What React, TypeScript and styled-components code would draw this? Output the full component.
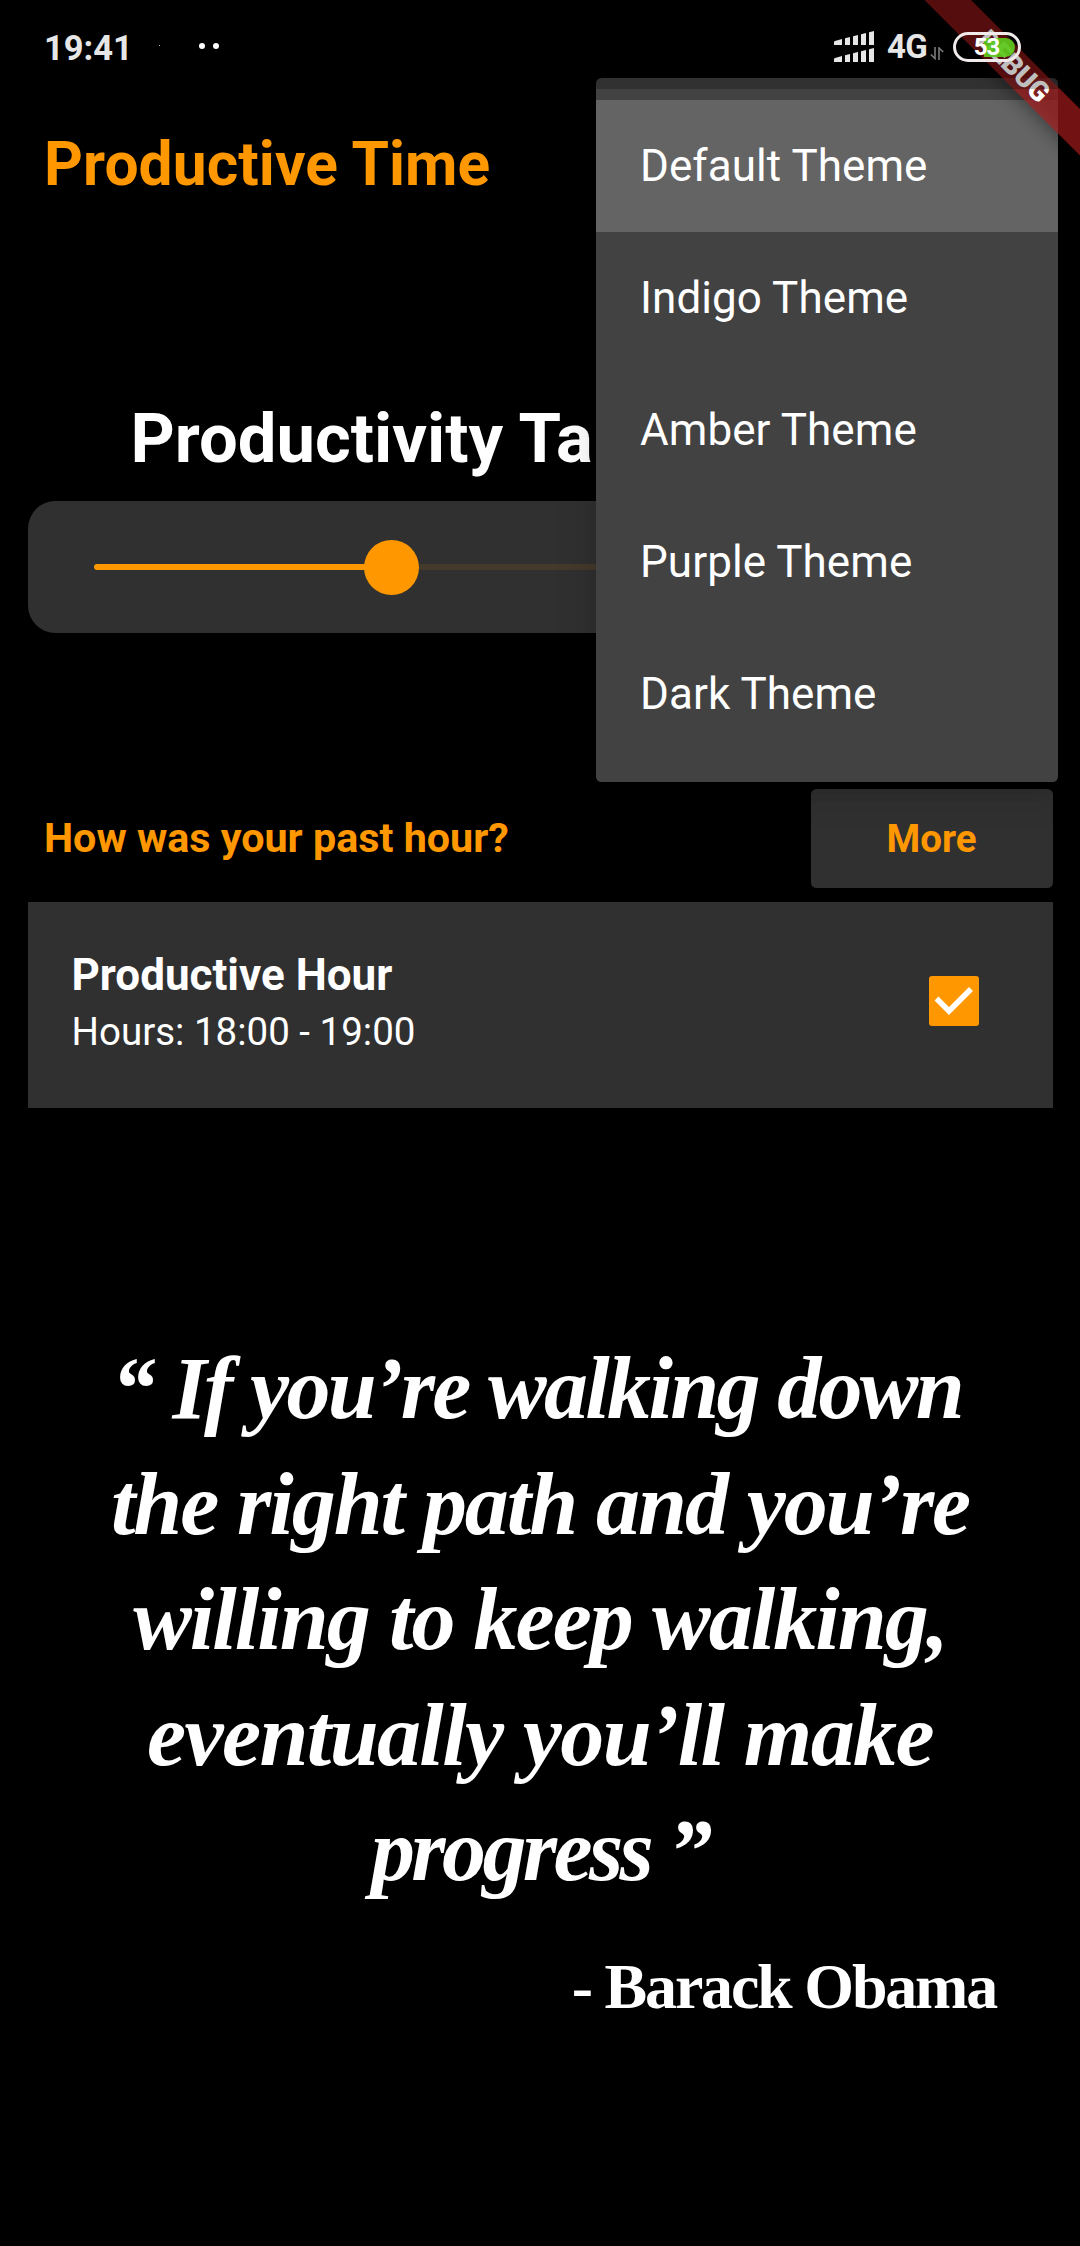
import React from "react";
import styled, { createGlobalStyle } from "styled-components";

const color = {
  accent: "#ff9800",
  surface: "#303030",
  menu: "#424242",
  menuActive: "#646464",
  status: "#e6e6e6",
};

const GlobalStyle = createGlobalStyle`
  body {
    margin: 0;
    background: #000;
  }
  * {
    box-sizing: border-box;
  }
`;

const Screen = styled.div`
  position: relative;
  display: flex;
  flex-direction: column;
  width: 1080px;
  height: 2246px;
  overflow: hidden;
  background: #000;
  color: #fff;
  font-family: Roboto, "Liberation Sans", sans-serif;
`;

/* Status bar */

const StatusBar = styled.header`
  position: relative;
  z-index: 3;
  display: flex;
  align-items: center;
  height: 89px;
  padding: 6px 59px 0 44px;
  background: rgba(0, 0, 0, 0.25);
  color: ${color.status};
`;

const Clock = styled.time`
  width: 88px;
  font-size: 34.5px;
  font-weight: 700;
  line-height: 40px;
  letter-spacing: 0;
`;

const Dot = styled.span<{ $size: number; $gap: number }>`
  width: ${(p) => p.$size}px;
  height: ${(p) => p.$size}px;
  margin-left: ${(p) => p.$gap}px;
  margin-bottom: 4px;
  border-radius: 50%;
  background: #fff;
`;

const StatusIcons = styled.div`
  display: flex;
  align-items: center;
  margin-left: auto;
`;

const Signal = styled.svg`
  display: block;
  width: 40px;
  height: 31px;
  margin: 0 13px 2px 0;
`;

const Network = styled.span`
  width: 43px;
  font-size: 33px;
  font-weight: 700;
  line-height: 38px;
  letter-spacing: -0.7px;
  margin-bottom: 1px;
`;

const Traffic = styled.svg`
  display: block;
  width: 14px;
  height: 13px;
  margin: 12px 9px 0 0;
`;

const Battery = styled.div`
  display: flex;
  align-items: center;
  justify-content: flex-end;
  width: 68px;
  height: 30px;
  margin-bottom: 1px;
  padding-right: 3px;
  border: 3px solid #f0eaea;
  border-radius: 15px;
`;

const BatteryLevel = styled.div`
  display: flex;
  align-items: center;
  justify-content: flex-end;
  width: 31px;
  height: 19px;
  padding-right: 16px;
  border-radius: 0 10px 10px 0;
  background: rgba(92, 202, 28, 0.92);
  color: #fff;
  font-size: 24px;
  font-weight: 700;
  line-height: 19px;
  letter-spacing: -1.2px;
`;

/* App bar */

const AppBar = styled.div`
  display: flex;
  align-items: center;
  height: 154px;
  padding: 0 44px 3px;
`;

const AppTitle = styled.h1`
  margin: 0;
  color: ${color.accent};
  font-size: 60.5px;
  font-weight: 700;
  line-height: 71px;
  letter-spacing: 0.07px;
`;

/* Slider */

const TaskSection = styled.section`
  display: flex;
  flex-direction: column;
  padding: 155px 27.5px 0;
`;

const TaskTitle = styled.h2`
  margin: 0 0 22px 103px;
  font-size: 68.75px;
  font-weight: 700;
  line-height: 81px;
`;

const SliderCard = styled.div`
  display: flex;
  align-items: center;
  height: 132px;
  padding: 0 66px;
  border-radius: 27.5px;
  background: ${color.surface};
`;

const TrackFilled = styled.div`
  flex: 1;
  height: 5.5px;
  border-radius: 3px 0 0 3px;
  background: ${color.accent};
`;

const Thumb = styled.div`
  flex: none;
  width: 55px;
  height: 55px;
  margin: 0 -27.5px;
  border-radius: 50%;
  background: ${color.accent};
  z-index: 1;
`;

const TrackRest = styled.div`
  flex: 2;
  height: 5.5px;
  border-radius: 0 3px 3px 0;
  background: #45392c;
`;

/* Past hour */

const HourSection = styled.section`
  display: flex;
  flex-direction: column;
  gap: 14px;
  padding: 156px 27.5px 0;
`;

const HourHeader = styled.div`
  display: flex;
  align-items: center;
  justify-content: space-between;
  height: 99px;
  padding-left: 16.5px;
`;

const HourQuestion = styled.h3`
  margin: 0 0 2px;
  color: ${color.accent};
  font-size: 41.25px;
  font-weight: 700;
  line-height: 48px;
`;

const MoreButton = styled.button`
  width: 242px;
  height: 99px;
  padding: 0;
  border: 0;
  border-radius: 5.5px;
  background: ${color.surface};
  color: ${color.accent};
  font: 700 38.5px / 45px Roboto, "Liberation Sans", sans-serif;
`;

const HourCard = styled.div`
  display: flex;
  align-items: flex-start;
  justify-content: space-between;
  height: 206px;
  padding: 47px 74px 0 44px;
  background: ${color.surface};
`;

const HourText = styled.div`
  display: flex;
  flex-direction: column;
  gap: 8px;
`;

const HourName = styled.strong`
  font-size: 44px;
  font-weight: 700;
  line-height: 52px;
`;

const HourRange = styled.span`
  font-size: 38.5px;
  line-height: 45px;
`;

const Checkbox = styled.div`
  display: flex;
  width: 50px;
  height: 50px;
  margin-top: 27px;
  border-radius: 3px;
  background: ${color.accent};
`;

/* Quote */

const Quote = styled.figure`
  display: flex;
  flex-direction: column;
  margin: 223px 0 0;
  font-family: "Liberation Serif", serif;
  font-weight: 700;
`;

const QuoteText = styled.blockquote`
  display: flex;
  flex-direction: column;
  align-items: center;
  margin: 0;
  font-size: 88px;
  font-style: italic;
  line-height: 115.5px;
`;

const QuoteLine = styled.span<{ $spacing: number; $indent?: number }>`
  margin-right: ${(p) => p.$indent ?? 0}px;
  letter-spacing: ${(p) => p.$spacing}px;
  white-space: nowrap;
`;

const Author = styled.figcaption`
  margin-top: 40px;
  padding-right: 84px;
  font-size: 64px;
  line-height: 75px;
  letter-spacing: -2.2px;
  text-align: right;
`;

/* Theme menu */

const Menu = styled.ul`
  position: absolute;
  top: 78px;
  right: 22px;
  z-index: 1;
  display: flex;
  flex-direction: column;
  width: 462px;
  margin: 0;
  padding: 22px 0;
  border-radius: 5.5px;
  background: ${color.menu};
  box-shadow:
    0 11px 16px -6px rgba(0, 0, 0, 0.12),
    0 8px 38px 3px rgba(0, 0, 0, 0.14);
  list-style: none;
`;

const MenuItem = styled.li<{ $active?: boolean }>`
  height: 132px;
  padding-left: 44px;
  background: ${(p) => (p.$active ? color.menuActive : "transparent")};
  font-size: 44px;
  line-height: 132px;
  letter-spacing: 0.07px;
`;

/* Corner ribbon */

const Ribbon = styled.div`
  position: absolute;
  top: 77px;
  left: 970px;
  z-index: 2;
  width: 220px;
  height: 33px;
  transform: rotate(45deg);
  transform-origin: 110px -77px;

  &::before {
    content: "";
    position: absolute;
    inset: 0;
    background: rgba(0, 0, 0, 0.5);
    filter: blur(10.9px);
  }
`;

const RibbonBand = styled.div`
  position: relative;
  height: 33px;
  background: rgba(183, 28, 28, 0.627);
  font-size: 28px;
  font-weight: 900;
  line-height: 33px;
  letter-spacing: -0.3px;
  text-align: center;
`;

const themes = ["Default Theme", "Indigo Theme", "Amber Theme", "Purple Theme", "Dark Theme"];

const quoteLines = [
  { text: "“ If you’re walking down", spacing: -2.67, indent: 6 },
  { text: "the right path and you’re", spacing: -2.05 },
  { text: "willing to keep walking,", spacing: -1.95 },
  { text: "eventually you’ll make", spacing: -1.61 },
  { text: "progress ”", spacing: -3.6 },
];

function SignalBars({ y }: { y: number }) {
  return (
    <g transform={`translate(0 ${y})`}>
      <path d="M0 14V11.2Q0 10.3 1 10L8 8V14Z" />
      <path d="M11 14V7.3L16 6V14Z" />
      <path d="M19 14V5.3L24 4V14Z" />
      <path d="M27 14V3.3L32 2V14Z" />
      <path d="M35 14V1.3L40 0V14Z" />
    </g>
  );
}

export default function App() {
  return (
    <Screen>
      <GlobalStyle />
      <StatusBar>
        <Clock>19:41</Clock>
        <Dot $size={1} $gap={27} />
        <Dot $size={6} $gap={39} />
        <Dot $size={6} $gap={8} />
        <StatusIcons>
          <Signal viewBox="0 0 40 31" fill={color.status}>
            <SignalBars y={0} />
            <SignalBars y={17} />
          </Signal>
          <Network>4G</Network>
          <Traffic viewBox="0 0 14 13" fill="none" stroke="#7a7a7a" strokeWidth="1.6">
            <path d="M5 0V11.5L0.8 7.5M9 13V1L13.2 5" />
          </Traffic>
          <Battery>
            <BatteryLevel>53</BatteryLevel>
          </Battery>
        </StatusIcons>
      </StatusBar>

      <AppBar>
        <AppTitle>Productive Time</AppTitle>
      </AppBar>

      <TaskSection>
        <TaskTitle>Productivity Ta</TaskTitle>
        <SliderCard>
          <TrackFilled />
          <Thumb />
          <TrackRest />
        </SliderCard>
      </TaskSection>

      <HourSection>
        <HourHeader>
          <HourQuestion>How was your past hour?</HourQuestion>
          <MoreButton>More</MoreButton>
        </HourHeader>
        <HourCard>
          <HourText>
            <HourName>Productive Hour</HourName>
            <HourRange>Hours: 18:00 - 19:00</HourRange>
          </HourText>
          <Checkbox>
            <svg width="50" height="50" viewBox="0 0 50 50" fill="none" stroke="#fff" strokeWidth="5.5">
              <path d="M7.5 22.5L20 35L42 13" />
            </svg>
          </Checkbox>
        </HourCard>
      </HourSection>

      <Quote>
        <QuoteText>
          {quoteLines.map((line) => (
            <QuoteLine key={line.text} $spacing={line.spacing} $indent={line.indent}>
              {line.text}
            </QuoteLine>
          ))}
        </QuoteText>
        <Author>- Barack Obama</Author>
      </Quote>

      <Menu>
        {themes.map((name, i) => (
          <MenuItem key={name} $active={i === 0}>
            {name}
          </MenuItem>
        ))}
      </Menu>

      <Ribbon>
        <RibbonBand>DEBUG</RibbonBand>
      </Ribbon>
    </Screen>
  );
}
